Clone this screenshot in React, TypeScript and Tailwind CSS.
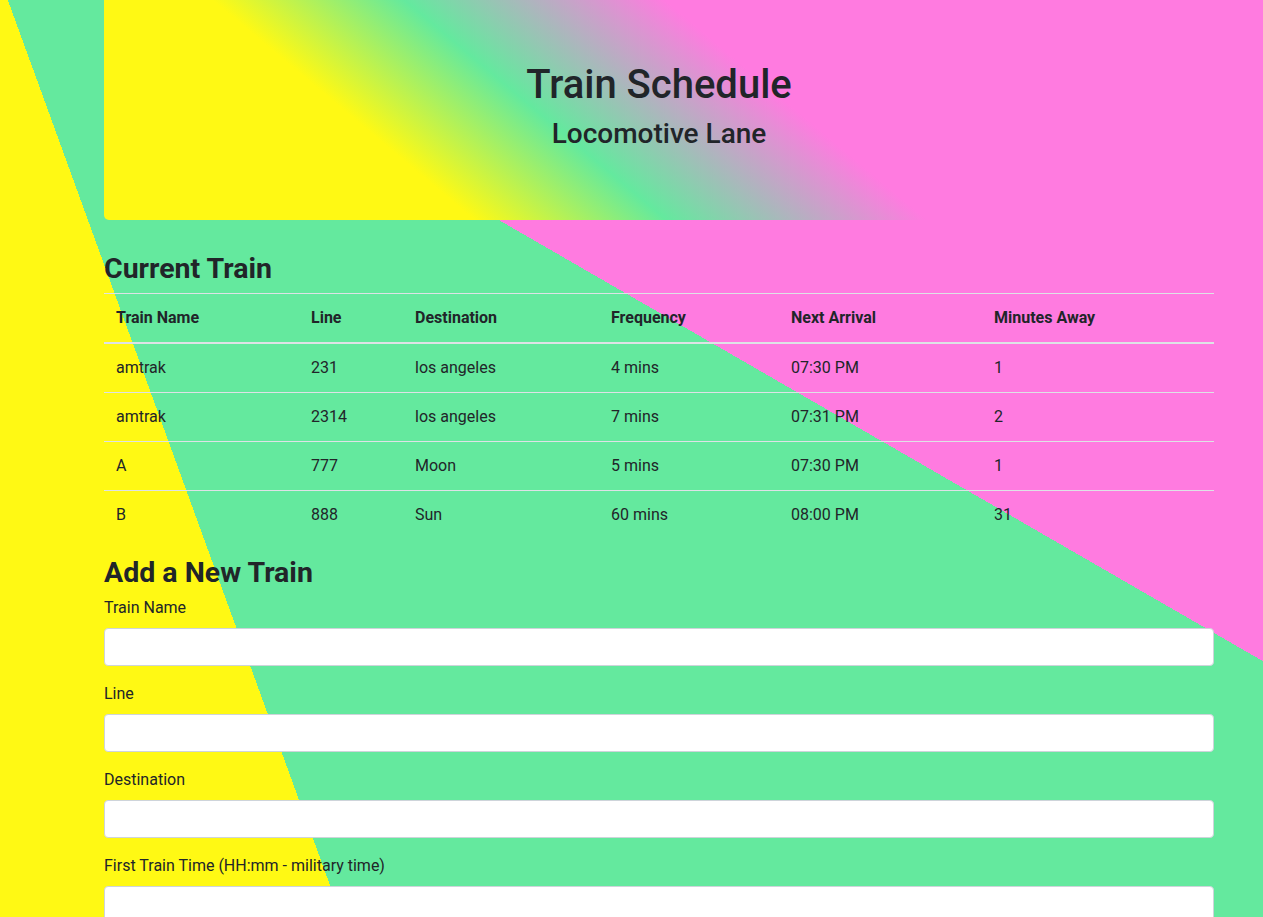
import React from "react";

const trains = [
  { name: "amtrak", line: "231", destination: "los angeles", frequency: "4 mins", next: "07:30 PM", away: "1" },
  { name: "amtrak", line: "2314", destination: "los angeles", frequency: "7 mins", next: "07:31 PM", away: "2" },
  { name: "A", line: "777", destination: "Moon", frequency: "5 mins", next: "07:30 PM", away: "1" },
  { name: "B", line: "888", destination: "Sun", frequency: "60 mins", next: "08:00 PM", away: "31" },
];

const columns = [
  { label: "Train Name", width: "w-[195px]" },
  { label: "Line", width: "w-[104px]" },
  { label: "Destination", width: "w-[196px]" },
  { label: "Frequency", width: "w-[180px]" },
  { label: "Next Arrival", width: "w-[203px]" },
  { label: "Minutes Away", width: "w-[232px]" },
];

const fields = [
  "Train Name",
  "Line",
  "Destination",
  "First Train Time (HH:mm - military time)",
  "Frequency (min)",
];

const App = () => {
  return (
    <div
      className="min-h-screen bg-[#64e99e] bg-no-repeat bg-[length:1263px_917px] bg-[image:linear-gradient(70deg,#fff914_321px,transparent_321px),linear-gradient(30deg,#64e99e_853px,#ff7be0_853px)] text-[#212529] font-['Segoe_UI',Roboto,'Liberation_Sans',sans-serif] text-base leading-6"
    >
      <div className="pl-[104px] pr-[49px] pb-10">
        {/* Jumbotron */}
        <div className="h-[220px] mb-8 rounded-b-[5px] bg-[linear-gradient(40deg,#fff914_27%,#64e99e_41%,#ff7be0_60%)] pt-[61px] text-center">
          <h1 className="text-[40px] leading-[48px] font-medium mb-2">Train Schedule</h1>
          <h3 className="text-[28px] leading-[34px] font-medium">Locomotive Lane</h3>
        </div>

        {/* Current trains */}
        <h3 className="text-[28.5px] leading-[32px] font-bold mb-2 pt-[1px]">Current Train</h3>
        <table className="w-full table-fixed border-collapse mb-4">
          <thead>
            <tr>
              {columns.map((c) => (
                <th
                  key={c.label}
                  className={`${c.width} text-left font-bold p-3 border-t border-b-2 border-[#dee2e6]`}
                >
                  {c.label}
                </th>
              ))}
            </tr>
          </thead>
          <tbody>
            {trains.map((t, i) => (
              <tr key={i}>
                <td className="p-3 border-t border-[#dee2e6]">{t.name}</td>
                <td className="p-3 border-t border-[#dee2e6]">{t.line}</td>
                <td className="p-3 border-t border-[#dee2e6]">{t.destination}</td>
                <td className="p-3 border-t border-[#dee2e6]">{t.frequency}</td>
                <td className="p-3 border-t border-[#dee2e6]">{t.next}</td>
                <td className="p-3 border-t border-[#dee2e6]">{t.away}</td>
              </tr>
            ))}
          </tbody>
        </table>

        {/* New train form */}
        <h3 className="text-[28.5px] leading-[33px] font-bold mb-[7px] pt-[1px]">Add a New Train</h3>
        <form onSubmit={(e) => e.preventDefault()}>
          {fields.map((f) => (
            <div key={f} className="mb-4">
              <label className="block mb-2">{f}</label>
              <input
                type="text"
                className="block w-full h-[38px] px-3 rounded-[4px] border border-[#ced4da] bg-white focus:outline-none"
              />
            </div>
          ))}
          <button
            type="submit"
            className="px-3 py-1.5 rounded-[4px] bg-[#007bff] text-white"
          >
            Submit
          </button>
        </form>
      </div>
    </div>
  );
};

export default App;
